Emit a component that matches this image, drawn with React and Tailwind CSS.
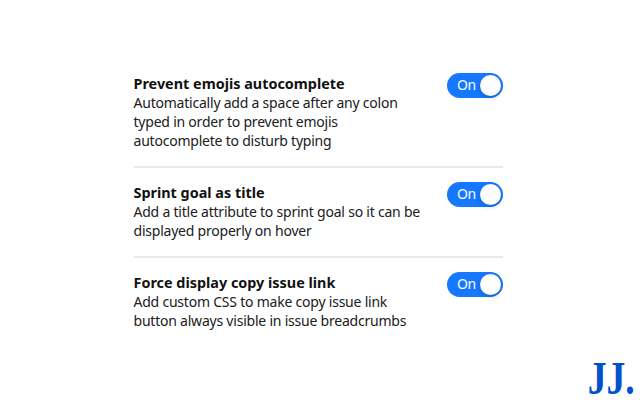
const items = [
  { title: 'Prevent emojis autocomplete', lines: ['Automatically add a space after any colon', 'typed in order to prevent emojis', 'autocomplete to disturb typing'] },
  { title: 'Sprint goal as title', lines: ['Add a title attribute to sprint goal so it can be', 'displayed properly on hover'] },
  { title: 'Force display copy issue link', lines: ['Add custom CSS to make copy issue link', 'button always visible in issue breadcrumbs'] },
];

function Toggle() {
  return (
    <button className="flex h-[25px] w-[56px] shrink-0 items-center justify-between rounded-full bg-[#1677ff] pr-[2px] pl-[10px] text-[14px] tracking-[-0.5px] text-white">
      <span className="pb-[2px]">On</span>
      <span className="size-[21px] rounded-full bg-white shadow-[0_2px_4px_rgba(0,35,11,0.2)]" />
    </button>
  );
}

export default function App() {
  return (
    <main className="flex h-[400px] w-[640px] flex-col justify-between overflow-hidden bg-white pt-[73px] font-['Noto_Sans',sans-serif] text-[14px] leading-[19px] text-[#202020]">
      <div className="ml-[134px] w-[369px]">
        {items.map((item) => (
          <section key={item.title} className="mb-[14px] flex items-start justify-between border-b-2 border-[#e9e9e9] pb-[16px] last:mb-0 last:border-0 last:pb-0">
            <div className="-ml-[0.5px] whitespace-nowrap pt-[1px]">
              <h2 className="text-[14.4px] font-bold text-[#111111]">{item.title}</h2>
              {item.lines.map((line) => <p key={line} className="tracking-[-0.22px]">{line}</p>)}
            </div>
            <Toggle />
          </section>
        ))}
      </div>
      <div className="mr-[5px] origin-right scale-x-[0.8] self-end font-['Liberation_Serif',serif] text-[47px] leading-[43px] font-bold text-[#0052cc]">JJ.</div>
    </main>
  );
}
